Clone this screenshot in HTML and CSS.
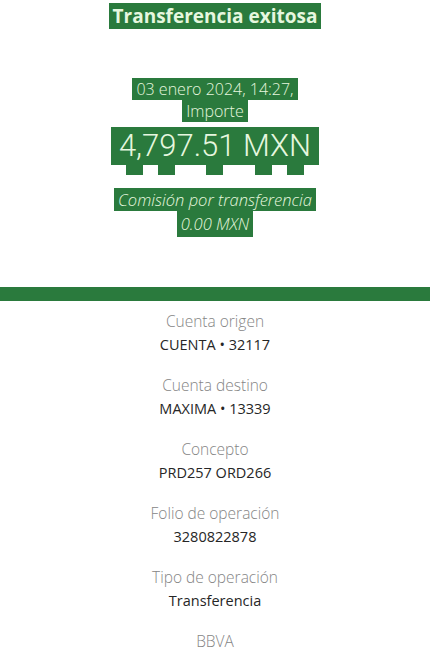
FILE: index.html
```html
<!DOCTYPE html>
<html lang="es">
<head>
    <meta charset="UTF-8">
    <meta name="viewport" content="width=device-width, initial-scale=1.0">
    <title>Transferencia exitosa</title>
    <link rel="stylesheet" href="styles.css">
</head>
<body>
    <div class="header">
        <div class="title"><span class="hl">Transferencia exitosa</span></div>

        <div class="date"><span class="hl">03 enero 2024, 14:27,</span></div>
        <div class="label-top"><span class="hl">Importe</span></div>
        <div class="amount"><span class="hl">4,797.51 MXN</span></div>
        <div class="bumps">
            <span></span><span></span><span></span><span></span><span></span>
        </div>

        <div class="fee"><span class="hl">Comisión por transferencia</span></div>
        <div class="fee"><span class="hl">0.00 MXN</span></div>
    </div>

    <div class="bar"></div>

    <div class="details">
        <div class="item">
            <div class="item-label">Cuenta origen</div>
            <div class="item-value">CUENTA • 32117</div>
        </div>
        <div class="item">
            <div class="item-label">Cuenta destino</div>
            <div class="item-value">MAXIMA • 13339</div>
        </div>
        <div class="item">
            <div class="item-label">Concepto</div>
            <div class="item-value">PRD257 ORD266</div>
        </div>
        <div class="item">
            <div class="item-label">Folio de operación</div>
            <div class="item-value">3280822878</div>
        </div>
        <div class="item">
            <div class="item-label">Tipo de operación</div>
            <div class="item-value">Transferencia</div>
        </div>
        <div class="item">
            <div class="item-label">BBVA</div>
        </div>
    </div>
</body>
</html>
```

FILE: styles.css
```css
body {
    margin: 0;
    background: #ffffff;
    font-family: "Open Sans", Roboto, "Liberation Sans", sans-serif;
    text-align: center;
}

.header {
    height: 287px;
    color: #e6f7df;
}

.hl {
    background-color: #2a7a3d;
    padding: 0 4px;
}

.title {
    font-size: 19px;
    font-weight: 700;
    line-height: 32px;
}

.date {
    margin-top: 47px;
    font-size: 16px;
    font-weight: 300;
    line-height: 20px;
}

.label-top {
    margin-top: 1px;
    font-size: 16px;
    font-weight: 300;
    line-height: 22px;
}

.amount {
    margin-top: 5px;
    font-family: Roboto, "Open Sans", sans-serif;
    font-size: 31px;
    font-weight: 300;
    line-height: 38px;
}
.amount .hl {
    display: inline-block;
    padding: 0 8px;
}

.bumps {
    display: flex;
    justify-content: center;
    height: 10px;
}
.bumps span {
    width: 17px;
    background-color: #2a7a3d;
}
.bumps span:nth-child(2) { margin-left: 15px; }
.bumps span:nth-child(3) { margin-left: 31px; }
.bumps span:nth-child(4) { margin-left: 32px; }
.bumps span:nth-child(5) { margin-left: 15px; }

.fee {
    font-size: 16.5px;
    font-weight: 300;
    font-style: italic;
    line-height: 21px;
}
.bumps + .fee {
    margin-top: 14px;
}
.fee + .fee .hl {
    display: inline-block;
    line-height: 27px;
}

.bar {
    height: 14px;
    background-color: #2a7a3d;
}

.details {
    padding-top: 8px;
}

.item {
    margin-bottom: 16px;
    line-height: 24px;
}

.item-label {
    color: #858585;
    font-size: 15.5px;
    font-weight: 300;
}

.item-value {
    color: #262626;
    font-size: 14.5px;
}
```
